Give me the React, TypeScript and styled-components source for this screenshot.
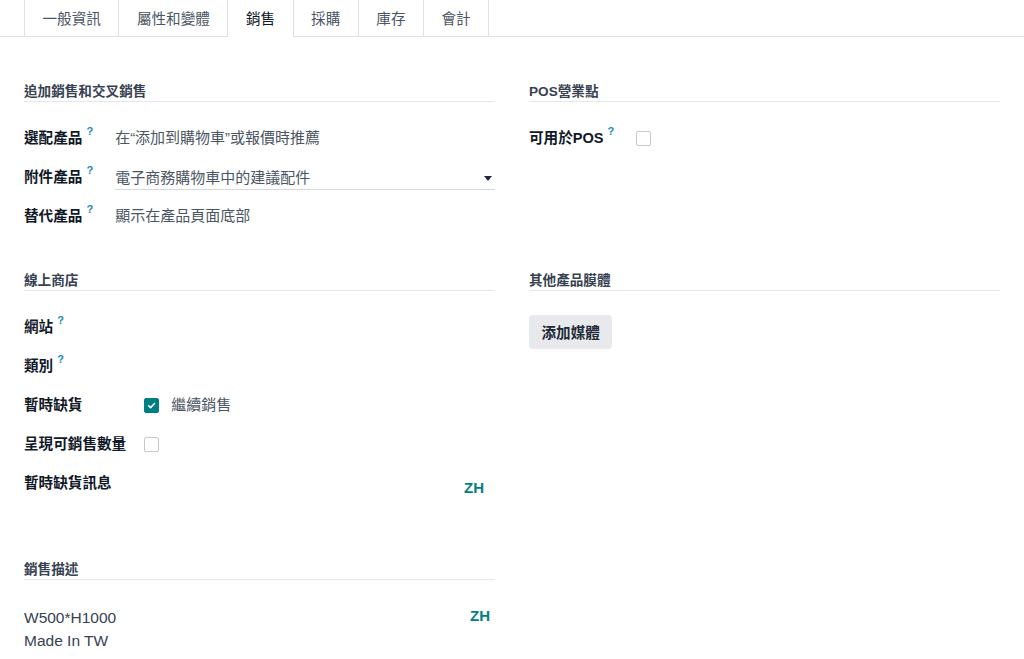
import React from "react";
import styled, { createGlobalStyle, css } from "styled-components";

const Global = createGlobalStyle`
  html, body { margin: 0; padding: 0; background: #ffffff; }
  body {
    font-family: "Liberation Sans", "Noto Sans CJK TC", sans-serif;
    font-size: 14.6px;
    color: #374151;
  }
  * { box-sizing: border-box; }
`;

const TabBar = styled.div`
  display: flex;
  height: 37px;
  padding-left: 24px;
  border-bottom: 1px solid #dee2e6;
`;

const Tab = styled.div<{ $active?: boolean }>`
  display: flex;
  align-items: center;
  height: 37px;
  margin-bottom: -1px;
  padding: 0 17.5px 0;
  border-right: 1px solid #dee2e6;
  color: #4b5563;
  line-height: 20px;
  white-space: nowrap;
  &:first-child { border-left: 1px solid #dee2e6; }
  ${(p) =>
    p.$active &&
    css`
      background: #ffffff;
      color: #111827;
    `}
`;

const Content = styled.div`
  display: grid;
  grid-template-columns: 1fr 1fr;
  column-gap: 34px;
  row-gap: 36px;
  align-items: start;
  padding: 44px 24px 0;
`;

const Section = styled.section``;

const SectionTitle = styled.div`
  font-size: 13.6px;
  font-weight: 700;
  line-height: 18px;
  color: #374151;
  padding-top: 2px;
  border-bottom: 1px solid #e4e7eb;
`;

const FieldGrid = styled.div`
  display: grid;
  grid-template-columns: max-content 1fr;
  column-gap: 18px;
  grid-auto-rows: minmax(39px, auto);
  padding-top: 15px;
`;

const Label = styled.div`
  font-weight: 700;
  color: #111827;
  line-height: 35px;
  padding-top: 4px;
  white-space: nowrap;
`;

const Help = styled.sup`
  display: inline-block;
  margin-left: 4px;
  margin-right: 4px;
  font-size: 11px;
  font-weight: 700;
  color: #1b8bb5;
  line-height: 1;
  vertical-align: 8px;
`;

const Value = styled.div`
  display: flex;
  align-items: center;
  min-height: 39px;
  padding-top: 3px;
  color: #4b5563;
  font-size: 15px;
  line-height: 20px;
`;

const SelectField = styled.div`
  align-self: start;
  display: flex;
  align-items: center;
  justify-content: space-between;
  margin-top: 7px;
  padding: 5px 2px 1px 0;
  border-bottom: 1px solid #d5d8dc;
  color: #4b5563;
  font-size: 15px;
  line-height: 20px;
`;

const Caret = styled.span`
  width: 0;
  height: 0;
  margin-right: 1px;
  border-top: 5px solid #1f2937;
  border-left: 4px solid transparent;
  border-right: 4px solid transparent;
`;

const Box = styled.span<{ $checked?: boolean }>`
  display: inline-flex;
  align-items: center;
  justify-content: center;
  width: 15px;
  height: 15px;
  border-radius: 2px;
  border: 1px solid #c5c8cd;
  background: #ffffff;
  ${(p) =>
    p.$checked &&
    css`
      border-color: #017e84;
      background: #017e84;
    `}
`;

const CheckText = styled.span`
  margin-left: 12px;
  color: #4b5563;
`;

const LangArea = styled.div<{ $padRight: number }>`
  display: flex;
  justify-content: flex-end;
  min-height: 61px;
  padding-top: 16px;
  padding-right: ${(p) => p.$padRight}px;
  line-height: 20px;
`;

const Lang = styled.span`
  font-weight: 700;
  color: #017e84;
  font-size: 15px;
  line-height: 20px;
`;

const MediaButton = styled.button`
  margin-top: 24px;
  height: 34px;
  padding: 1px 12.5px 0;
  border: none;
  border-radius: 4px;
  background: #e7e9ed;
  color: #1f2937;
  font: inherit;
  font-weight: 600;
  line-height: 20px;
`;

const Description = styled.div`
  display: flex;
  justify-content: space-between;
  align-items: flex-start;
  padding: 26px 5px 0 0;
  font-size: 15.5px;
  line-height: 23px;
  color: #374151;
`;

const Check = () => (
  <svg width="9" height="9" viewBox="0 0 10 10">
    <path d="M1.8 5.3 L4 7.4 L8.3 2.8" fill="none" stroke="#fff" strokeWidth="1.8" strokeLinecap="round" strokeLinejoin="round" />
  </svg>
);

const tabs = ["一般資訊", "屬性和變體", "銷售", "採購", "庫存", "會計"];

export default function App() {
  return (
    <>
      <Global />
      <TabBar>
        {tabs.map((t) => (
          <Tab key={t} $active={t === "銷售"}>
            {t}
          </Tab>
        ))}
      </TabBar>
      <Content>
        <Section>
          <SectionTitle>追加銷售和交叉銷售</SectionTitle>
          <FieldGrid>
            <Label>
              選配產品<Help>?</Help>
            </Label>
            <Value>在“添加到購物車”或報價時推薦</Value>
            <Label>
              附件產品<Help>?</Help>
            </Label>
            <SelectField>
              <span>電子商務購物車中的建議配件</span>
              <Caret />
            </SelectField>
            <Label>
              替代產品<Help>?</Help>
            </Label>
            <Value>顯示在產品頁面底部</Value>
          </FieldGrid>
        </Section>

        <Section>
          <SectionTitle>POS營業點</SectionTitle>
          <FieldGrid>
            <Label>
              可用於POS<Help>?</Help>
            </Label>
            <Value>
              <Box />
            </Value>
          </FieldGrid>
        </Section>

        <Section>
          <SectionTitle>線上商店</SectionTitle>
          <FieldGrid>
            <Label>
              網站<Help>?</Help>
            </Label>
            <Value />
            <Label>
              類別<Help>?</Help>
            </Label>
            <Value />
            <Label>暫時缺貨</Label>
            <Value>
              <Box $checked>
                <Check />
              </Box>
              <CheckText>繼續銷售</CheckText>
            </Value>
            <Label>呈現可銷售數量</Label>
            <Value>
              <Box />
            </Value>
            <Label>暫時缺貨訊息</Label>
            <LangArea $padRight={11}>
              <Lang>ZH</Lang>
            </LangArea>
          </FieldGrid>
        </Section>

        <Section>
          <SectionTitle>其他產品膜體</SectionTitle>
          <MediaButton>添加媒體</MediaButton>
        </Section>

        <Section>
          <SectionTitle>銷售描述</SectionTitle>
          <Description>
            <div>
              W500*H1000
              <br />
              Made In TW
            </div>
            <Lang>ZH</Lang>
          </Description>
        </Section>
      </Content>
    </>
  );
}
